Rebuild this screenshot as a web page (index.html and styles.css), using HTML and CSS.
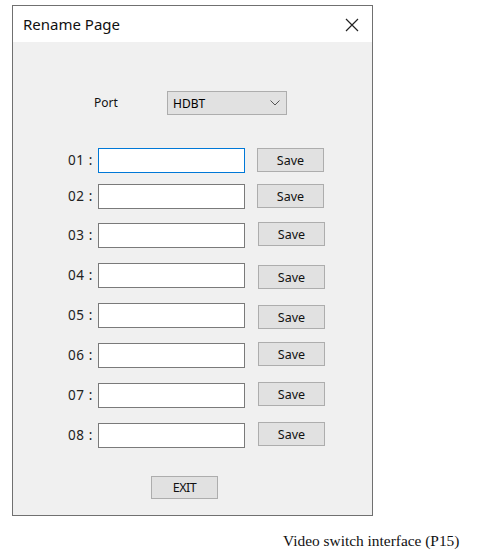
FILE: index.html
```html
<!DOCTYPE html>
<html>
<head>
<meta charset="utf-8">
<link rel="stylesheet" href="styles.css">
</head>
<body>
<div class="dialog">
  <div class="titlebar">
    <span class="title">Rename Page</span>
    <svg class="close" width="14" height="14" viewBox="0 0 14 14"><path d="M1 1 L13 13 M13 1 L1 13" stroke="#222" stroke-width="1.2" fill="none"/></svg>
  </div>
  <div class="content">
    <div class="port-row">
      <span class="port-label">Port</span>
      <div class="combo">
        <span>HDBT</span>
        <svg class="chev" width="10" height="6" viewBox="0 0 10 6"><path d="M0.5 0.5 L5 5 L9.5 0.5" stroke="#555" stroke-width="1" fill="none"/></svg>
      </div>
    </div>
    <div class="rows">
      <div class="row r1"><span class="num">01 :</span><div class="field focus"></div><div class="btn save">Save</div></div>
      <div class="row r2"><span class="num">02 :</span><div class="field"></div><div class="btn save">Save</div></div>
      <div class="row r3"><span class="num">03 :</span><div class="field"></div><div class="btn save s2">Save</div></div>
      <div class="row r4"><span class="num">04 :</span><div class="field"></div><div class="btn save s2 low">Save</div></div>
      <div class="row"><span class="num">05 :</span><div class="field"></div><div class="btn save s2 low">Save</div></div>
      <div class="row"><span class="num">06 :</span><div class="field"></div><div class="btn save s2">Save</div></div>
      <div class="row"><span class="num">07 :</span><div class="field"></div><div class="btn save s2">Save</div></div>
      <div class="row"><span class="num">08 :</span><div class="field"></div><div class="btn save s2">Save</div></div>
    </div>
    <div class="exit-row"><div class="btn exit">EXIT</div></div>
  </div>
</div>
<p class="caption">Video switch interface (P15)</p>
</body>
</html>
```
FILE: styles.css
```css
html, body {
  margin: 0;
  padding: 0;
  background: #ffffff;
}
body {
  width: 493px;
  height: 557px;
  overflow: hidden;
  font-family: "Noto Sans", "Liberation Sans", sans-serif;
}
.dialog {
  margin: 5px 0 0 12px;
  width: 359px;
  height: 509px;
  border: 1px solid #707070;
  background: #f0f0f0;
  display: flex;
  flex-direction: column;
}
.titlebar {
  height: 36px;
  background: #ffffff;
  display: flex;
  align-items: center;
  justify-content: space-between;
  padding: 0 13px 0 10px;
}
.title {
  font-family: "Noto Sans", sans-serif;
  font-size: 15px;
  color: #111;
  margin-top: -1px;
}
.close {
  display: block;
  margin-top: 1px;
}
.content {
  padding-top: 49px;
}
.port-row {
  display: flex;
  align-items: center;
  height: 24px;
}
.port-label {
  width: 73px;
  margin-left: 81px;
  font-size: 12px;
  color: #111;
  margin-top: -2px;
}
.combo {
  border: 1px solid #adadad;
  background: #e1e1e1;
  display: flex;
  align-items: center;
  justify-content: space-between;
  padding: 0 6px 0 5px;
  box-sizing: border-box;
  width: 120px;
  height: 24px;
  font-size: 12px;
  color: #000;
}
.chev {
  display: block;
}
.rows {
  margin-top: 33px;
  display: flex;
  flex-direction: column;
  gap: 15px;
}
.row {
  display: flex;
  align-items: flex-start;
  height: 25px;
}
.r1 { margin-bottom: -4px; }
.r2 { margin-bottom: -1px; }
.num {
  width: 80px;
  text-align: right;
  font-size: 13.5px;
  color: #222;
  line-height: 25px;
  letter-spacing: 0.6px;
}
.field {
  margin-left: 5px;
  width: 147px;
  height: 25px;
  box-sizing: border-box;
  border: 1px solid #7a7a7a;
  background: #ffffff;
}
.field.focus {
  border-color: #0078d7;
}
.btn {
  box-sizing: border-box;
  border: 1px solid #adadad;
  background: #e1e1e1;
  font-size: 12.5px;
  color: #111;
  display: flex;
  align-items: center;
  justify-content: center;
}
.save {
  margin-left: 12px;
  width: 67px;
  height: 24px;
}
.save.s2 {
  margin-left: 13px;
  margin-top: -1px;
}
.save.low {
  margin-top: 2px;
}
.exit-row {
  margin-top: 28px;
  padding-left: 138px;
}
.exit {
  width: 67px;
  height: 23px;
  letter-spacing: -0.5px;
}
.caption {
  margin: 16px 0 0 283px;
  font-family: "Liberation Serif", serif;
  font-size: 15.4px;
  color: #111;
}
```
